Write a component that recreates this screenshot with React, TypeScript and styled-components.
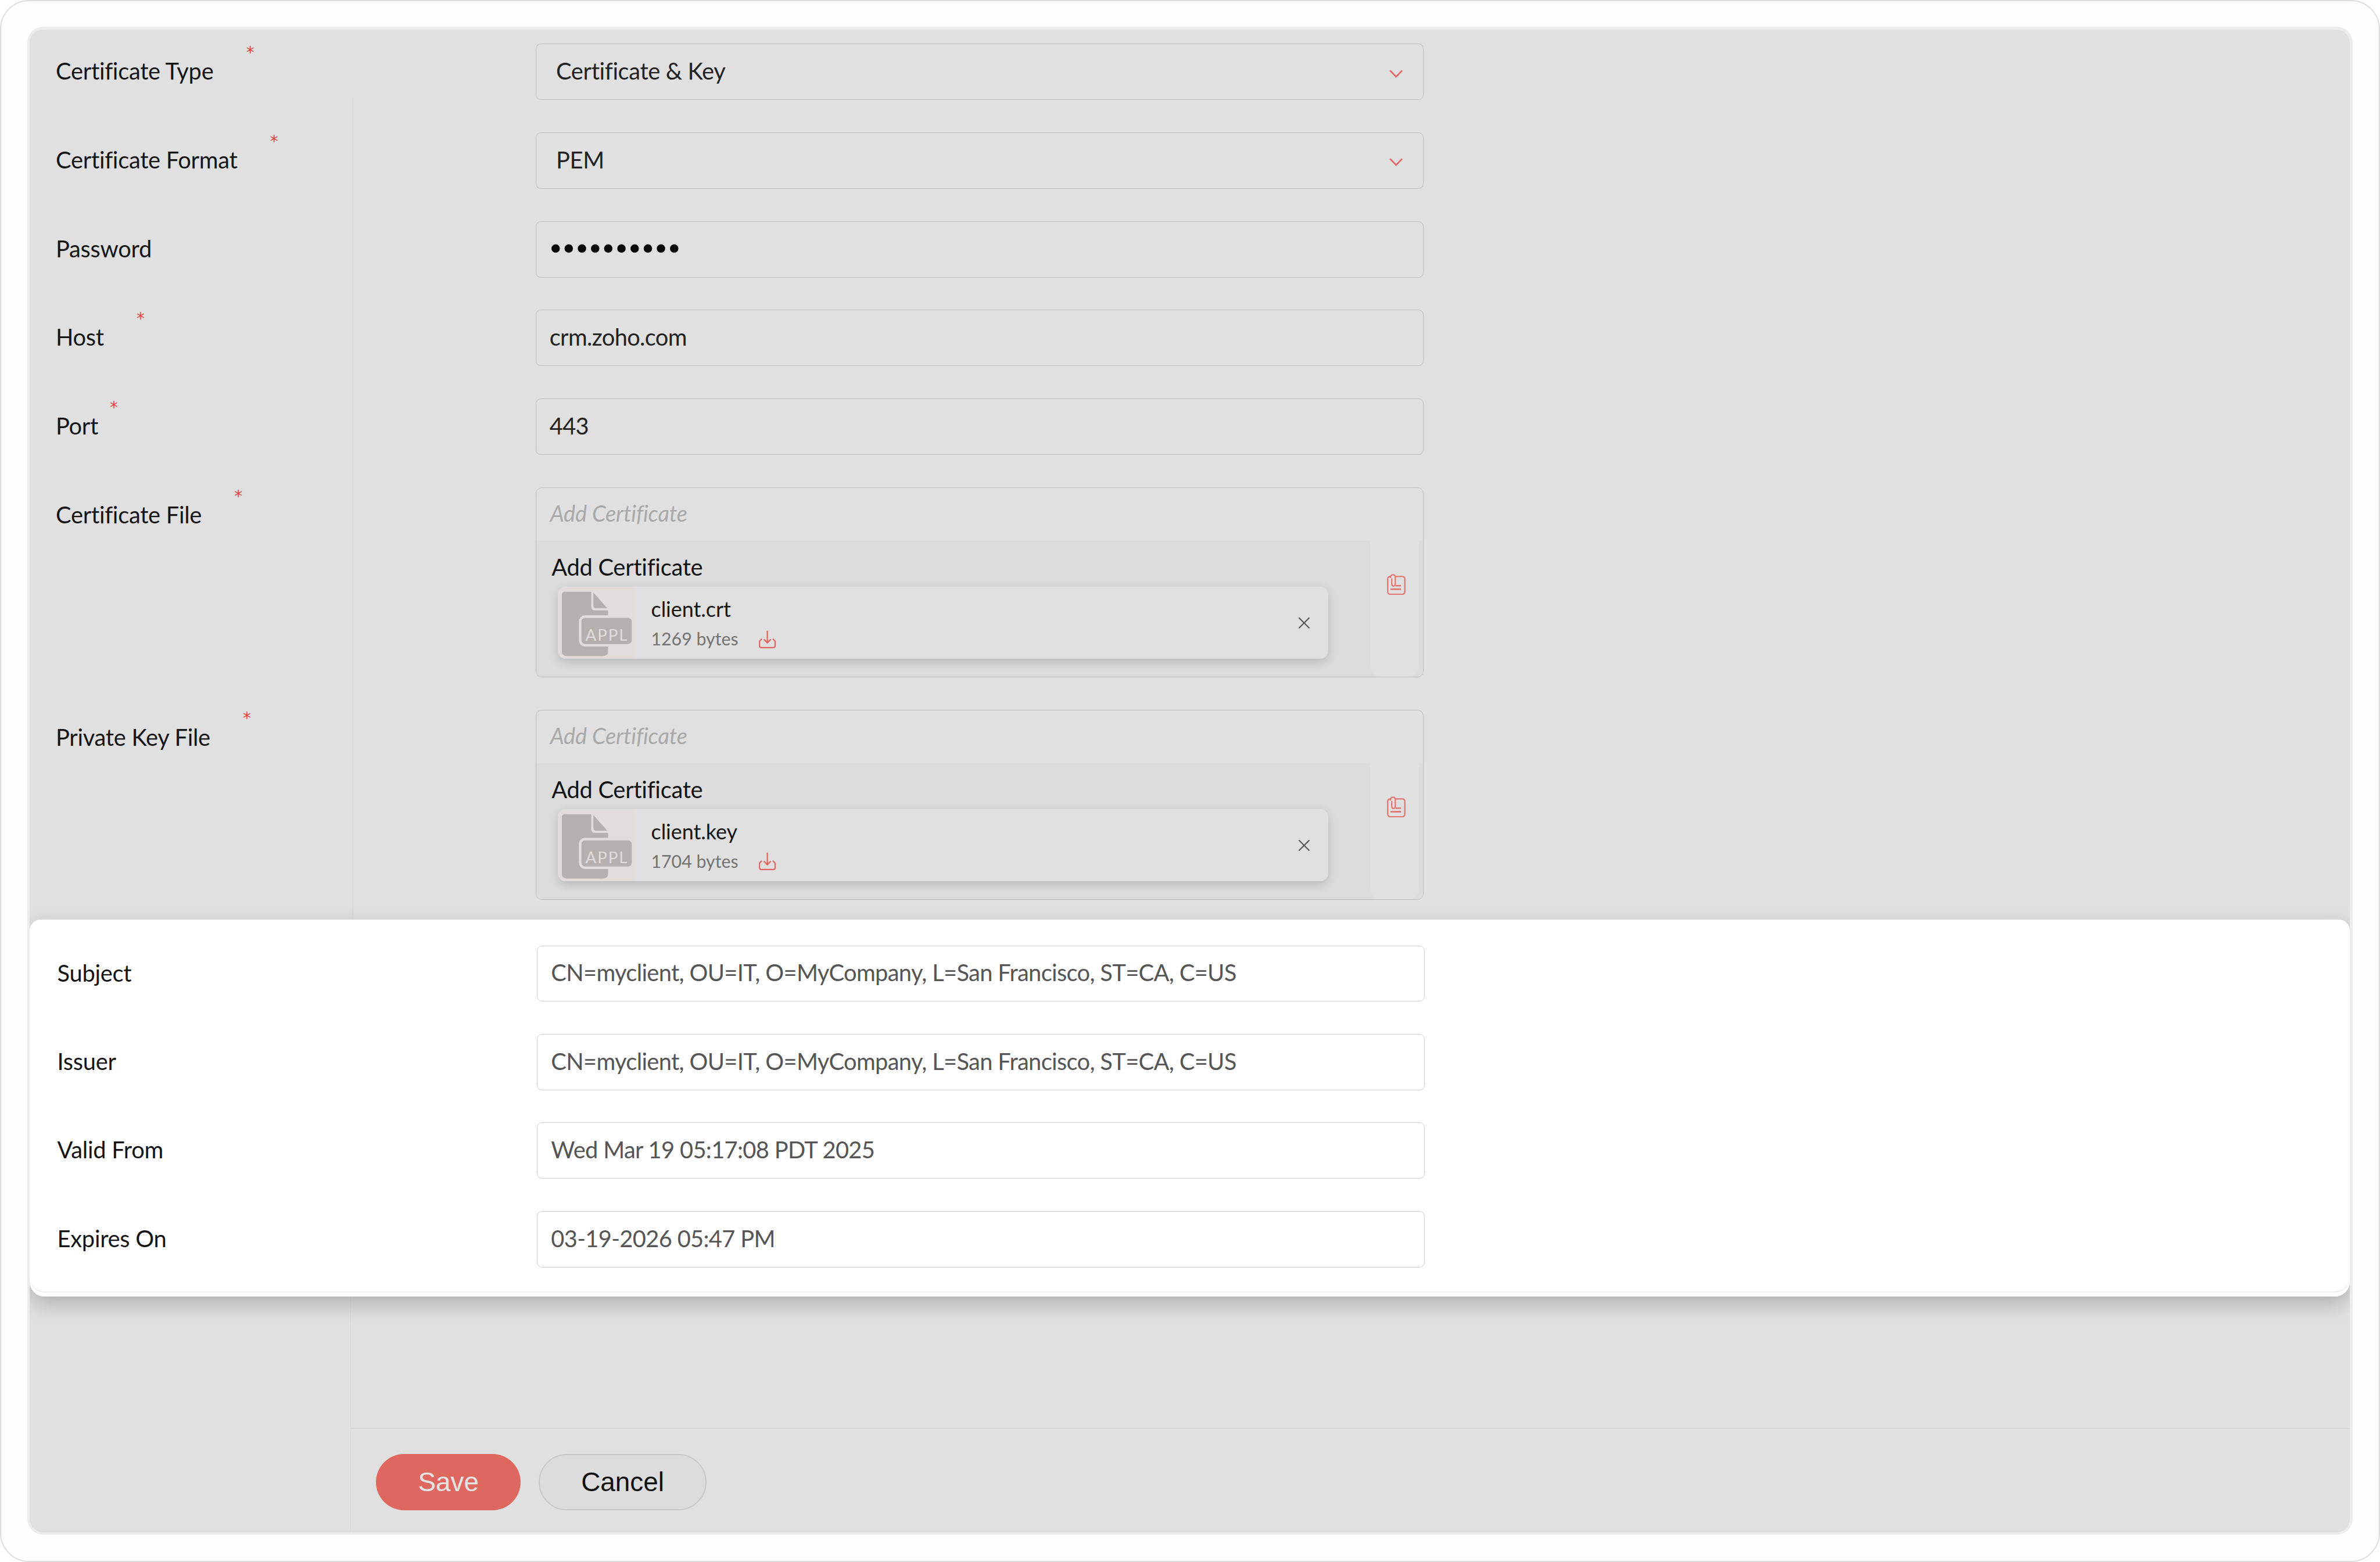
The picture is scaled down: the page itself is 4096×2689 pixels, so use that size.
import React from "react";
import styled, { createGlobalStyle } from "styled-components";

const GlobalStyle = createGlobalStyle`
  html, body { margin: 0; padding: 0; background: #fff; overflow: hidden; }
  * { box-sizing: border-box; }
`;

const ACCENT = "#e2645f";
const ZONE = "#e2dcdb";

const Frame = styled.div`
  zoom: 0.86523;
  width: 4734px;
  height: 3108px;
  background: #fefefe;
  border: 3px solid #dddddd;
  border-radius: 58px;
  padding: 51px 52px 52px 52px;
  font-family: Lato, "Liberation Sans", sans-serif;
`;

const Panel = styled.div`
  height: 100%;
  display: flex;
  flex-direction: column;
  background: #e0e0e0;
  border-style: solid;
  border-color: #ececec;
  border-width: 6px 6px 5px 5px;
  border-radius: 32px;
  overflow: hidden;
  box-shadow: inset 0 -3px 3px -1px rgba(0, 0, 0, 0.02);
`;

const FormArea = styled.div`
  position: relative;
  height: 1770px;
  padding-top: 28px;
  display: flex;
  flex-direction: column;
  gap: 64.5px;
  &::before {
    content: "";
    position: absolute;
    left: 642px;
    top: 135px;
    bottom: 0;
    width: 2px;
    background: #d8d8d8;
  }
`;

const Row = styled.div`
  position: relative;
  display: flex;
  align-items: flex-start;
`;

const LabelCol = styled.div<{ $width?: number; $pad?: number }>`
  flex: none;
  width: ${(p) => p.$width ?? 1007}px;
  padding-left: ${(p) => p.$pad ?? 52}px;
`;

const Label = styled.span<{ $required?: boolean; $starGap?: number }>`
  position: relative;
  display: inline-block;
  font-size: 46px;
  letter-spacing: -0.3px;
  line-height: 109px;
  color: #151515;
  ${(p) =>
    p.$required
      ? `&::after {
    content: "*";
    position: absolute;
    left: calc(100% + ${p.$starGap ?? 65}px);
    top: -36px;
    font-family: "DejaVu Sans", sans-serif;
    font-size: 32px;
    letter-spacing: 0;
    color: #e83f3f;
  }`
      : ""}
`;

const Field = styled.div<{ $light?: boolean }>`
  position: relative;
  width: 1766px;
  height: 112px;
  display: flex;
  align-items: center;
  border: 2px solid ${(p) => (p.$light ? "#cccccc" : "#bcbcbc")};
  border-radius: 10px;
  padding: 0 0 5px ${(p) => (p.$light ? 27 : 26)}px;
  font-size: 46px;
  letter-spacing: -0.75px;
  color: ${(p) => (p.$light ? "#555555" : "#222222")};
  background: ${(p) => (p.$light ? "#ffffff" : "transparent")};
`;

const SelectField = styled(Field)`
  padding-left: 39px;
  letter-spacing: -0.4px;
`;

const Chevron = styled.svg`
  position: absolute;
  right: 40px;
  top: 50px;
  width: 27px;
  height: 17px;
`;

const Dots = styled.span`
  font-family: "DejaVu Sans", sans-serif;
  font-size: 58px;
  letter-spacing: -8px;
  line-height: 1;
  color: #0a0a0a;
  margin: 5px 0 0 -5px;
`;

const FileBox = styled.div`
  width: 1766px;
  height: 378px;
  border: 2px solid #bcbcbc;
  border-radius: 12px;
  overflow: hidden;
  display: flex;
  flex-direction: column;
`;

const PlaceholderBar = styled.div`
  flex: none;
  height: 106px;
  padding: 0 0 6px 27px;
  display: flex;
  align-items: center;
  font-size: 44px;
  font-style: italic;
  letter-spacing: -0.15px;
  color: #a9a9a9;
`;

const FileBody = styled.div`
  flex: 1;
  display: flex;
  background: #dcdcdc;
`;

const DropZone = styled.div`
  flex: 1;
  padding: 23px 0 0 30px;
`;

const DropTitle = styled.div`
  font-size: 46px;
  letter-spacing: -0.3px;
  line-height: 57px;
  color: #111;
`;

const FileCard = styled.div`
  width: 1533px;
  height: 143px;
  margin: 11px 0 0 12px;
  display: flex;
  align-items: stretch;
  background: #e0e0e0;
  border-radius: 16px;
  box-shadow: 0 6px 18px rgba(0, 0, 0, 0.16);
  overflow: hidden;
`;

const FileThumb = styled.svg`
  flex: none;
  width: 153px;
  height: 143px;
  background: ${ZONE};
`;

const FileInfo = styled.div`
  flex: 1;
  padding-left: 33px;
  display: flex;
  flex-direction: column;
`;

const FileName = styled.div`
  margin-top: 22px;
  font-size: 41.5px;
  line-height: 46px;
  color: #151515;
`;

const FileMeta = styled.div`
  margin-top: 13px;
  display: flex;
  align-items: center;
  gap: 40px;
  font-size: 35px;
  line-height: 46px;
  color: #737373;
`;

const DownloadIcon = styled.svg`
  width: 36px;
  height: 36px;
`;

const CloseIcon = styled.svg`
  flex: none;
  align-self: center;
  width: 24px;
  height: 24px;
  margin-right: 36px;
`;

const AttachCol = styled.div`
  flex: none;
  width: 97px;
  background: #e0e0e0;
  border-radius: 0 0 20px 20px;
  display: flex;
  justify-content: center;
  padding: 65px 0 0 6px;
`;

const AttachIcon = styled.svg`
  width: 38px;
  height: 42px;
`;

const EdgeStrip = styled.div`
  flex: none;
  width: 8px;
`;

const Highlight = styled.section`
  position: relative;
  z-index: 1;
  height: 750px;
  padding-top: 52px;
  display: flex;
  flex-direction: column;
  gap: 64.2px;
  background: #fff;
  border-radius: 22px 22px 30px 30px;
  box-shadow: inset 0 -8px 0 #fff, inset 0 -10px 0 #ececec, 0 14px 40px rgba(0, 0, 0, 0.22);
`;

const BottomArea = styled.div`
  flex: 1;
  display: flex;
  min-height: 0;
`;

const SideCol = styled.div`
  flex: none;
  width: 639px;
  border-right: 2px solid #d8d8d8;
`;

const MainCol = styled.div`
  flex: 1;
  display: flex;
  flex-direction: column;
`;

const Spacer = styled.div`
  flex: 1;
`;

const Footer = styled.div`
  flex: none;
  height: 208px;
  padding: 49px 0 0 50px;
  display: flex;
  gap: 36px;
  align-items: flex-start;
  border-top: 3px solid #d6d6d6;
`;

const Button = styled.button<{ $primary?: boolean }>`
  height: 113px;
  width: ${(p) => (p.$primary ? 288 : 333)}px;
  border-radius: 57px;
  font-family: "Liberation Sans", Arial, sans-serif;
  font-size: 53px;
  color: ${(p) => (p.$primary ? "#e4e4e4" : "#111")};
  background: ${(p) => (p.$primary ? "#de6860" : "#dcdcdc")};
  border: ${(p) => (p.$primary ? "none" : "3px solid #c8c8c8")};
  padding: 0;
`;

const ChevronDown = () => (
  <Chevron viewBox="0 0 27 17" fill="none">
    <path d="M1.5 1.5 L13.5 14 L25.5 1.5" stroke={ACCENT} strokeWidth="3" />
  </Chevron>
);

const Thumb = () => (
  <FileThumb viewBox="0 0 153 143">
    <path
      d="M14 10 H66.5 V40 Q66.5 47 73 47 H100 V128 Q100 138 90 138 H18 Q8 138 8 128 V16 Q8 10 14 10 Z"
      fill="#b5b0ad"
    />
    <path d="M70.7 11.7 L98.3 42.7 H76 Q70.7 42.7 70.7 37 Z" fill="#b5b0ad" />
    <rect x="42" y="57" width="110" height="62" rx="12" fill={ZONE} />
    <rect x="47" y="62" width="100" height="52" rx="7" fill="#b5b0ad" />
    <text x="55" y="107" fontFamily="Lato, sans-serif" fontSize="32" letterSpacing="2.2" fill={ZONE}>
      APPL
    </text>
  </FileThumb>
);

const Download = () => (
  <DownloadIcon viewBox="0 0 36 36" fill="none" stroke={ACCENT} strokeWidth="2.6">
    <path d="M18 1 V25 M11 18 L18 25 L25 18" />
    <path d="M7 17 L2.5 22 V31 Q2.5 34.5 6 34.5 H30 Q33.5 34.5 33.5 31 V22 L29 17" />
  </DownloadIcon>
);

const Close = () => (
  <CloseIcon viewBox="0 0 24 24" fill="none" stroke="#555" strokeWidth="2.4">
    <path d="M1.5 1.5 L22.5 22.5 M22.5 1.5 L1.5 22.5" />
  </CloseIcon>
);

const Attach = () => (
  <AttachIcon viewBox="0 0 38 42" fill="none" stroke={ACCENT} strokeWidth="2.6" opacity="0.85">
    <path d="M15 5 H30 Q35.5 5 35.5 10 V35 Q35.5 40.5 30 40.5 H7 Q1.5 40.5 1.5 35 V10 Q1.5 5 7 5" />
    <path d="M7 8 Q7 1.5 12 1.5 Q16.5 1.5 16.5 6 V20 Q16.5 24 13 24 Q9.5 24 9.5 20 V9" />
    <path d="M17 23.5 H28 M7 30.5 H28" strokeWidth="3" />
  </AttachIcon>
);

const FileField = ({ name, size }: { name: string; size: string }) => (
  <FileBox>
    <PlaceholderBar>Add Certificate</PlaceholderBar>
    <FileBody>
      <DropZone>
        <DropTitle>Add Certificate</DropTitle>
        <FileCard>
          <Thumb />
          <FileInfo>
            <FileName>{name}</FileName>
            <FileMeta>
              {size}
              <Download />
            </FileMeta>
          </FileInfo>
          <Close />
        </FileCard>
      </DropZone>
      <AttachCol>
        <Attach />
      </AttachCol>
      <EdgeStrip />
    </FileBody>
  </FileBox>
);

const readOnly = [
  ["Subject", "CN=myclient, OU=IT, O=MyCompany, L=San Francisco, ST=CA, C=US"],
  ["Issuer", "CN=myclient, OU=IT, O=MyCompany, L=San Francisco, ST=CA, C=US"],
  ["Valid From", "Wed Mar 19 05:17:08 PDT 2025"],
  ["Expires On", "03-19-2026 05:47 PM"],
];

export default function App() {
  return (
    <Frame>
      <GlobalStyle />
      <Panel>
        <FormArea>
          <Row>
            <LabelCol><Label $required>Certificate Type</Label></LabelCol>
            <SelectField>Certificate &amp; Key<ChevronDown /></SelectField>
          </Row>
          <Row>
            <LabelCol><Label $required>Certificate Format</Label></LabelCol>
            <SelectField>PEM<ChevronDown /></SelectField>
          </Row>
          <Row>
            <LabelCol><Label>Password</Label></LabelCol>
            <Field><Dots>••••••••••</Dots></Field>
          </Row>
          <Row>
            <LabelCol><Label $required>Host</Label></LabelCol>
            <Field>crm.zoho.com</Field>
          </Row>
          <Row>
            <LabelCol><Label $required $starGap={23}>Port</Label></LabelCol>
            <Field>443</Field>
          </Row>
          <Row>
            <LabelCol><Label $required>Certificate File</Label></LabelCol>
            <FileField name="client.crt" size="1269 bytes" />
          </Row>
          <Row>
            <LabelCol><Label $required>Private Key File</Label></LabelCol>
            <FileField name="client.key" size="1704 bytes" />
          </Row>
        </FormArea>
        <Highlight>
          {readOnly.map(([label, value]) => (
            <Row key={label}>
              <LabelCol $width={1009} $pad={55}><Label>{label}</Label></LabelCol>
              <Field $light>{value}</Field>
            </Row>
          ))}
        </Highlight>
        <BottomArea>
          <SideCol />
          <MainCol>
            <Spacer />
            <Footer>
              <Button $primary>Save</Button>
              <Button>Cancel</Button>
            </Footer>
          </MainCol>
        </BottomArea>
      </Panel>
    </Frame>
  );
}
